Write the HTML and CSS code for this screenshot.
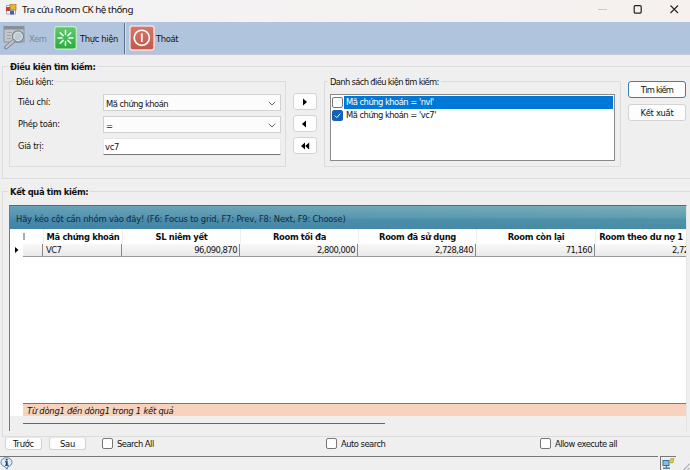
FILE: index.html
```html
<!DOCTYPE html>
<html lang="vi">
<head>
  <meta charset="UTF-8" />
  <meta name="viewport" content="width=device-width, initial-scale=1.0" />
  <title>Tra cứu Room CK hệ thống</title>
  <link rel="stylesheet" href="styles.css">
</head>
<body>
  <div class="titlebar">
    <svg class="app-icon" width="11" height="11" viewBox="0 0 11 11">
      <rect x="0.5" y="1.5" width="9" height="8.5" fill="#fff" stroke="#a9a9b4"/>
      <rect x="4" y="0" width="6" height="6" fill="#e8b43c" stroke="#9a7418" stroke-width=".7"/>
      <rect x="0" y="3" width="4" height="4" fill="#c9422f"/>
      <rect x="4" y="6.5" width="4" height="4" fill="#3e62b8"/>
    </svg>
    <span class="caption">Tra cứu Room CK hệ thống</span>
    <svg class="window-buttons" width="84" height="12" viewBox="0 0 84 12" fill="none">
      <path d="M0 5.5h9" stroke="#c9c6c4"/>
      <rect x="36.2" y="1.7" width="7" height="7.4" rx="1" stroke="#222" stroke-width="1.2"/>
      <path d="M72.5 1.5l7.5 7.5M80 1.5l-7.5 7.5" stroke="#222" stroke-width="1.1"/>
    </svg>
  </div>

  <div class="toolbar">
    <div class="tool tool-view">
      <svg width="24" height="26" viewBox="0 0 24 26">
        <rect x="1" y="1.5" width="20" height="15.5" fill="#c2c6ca" stroke="#8b9198"/>
        <path d="M1 3h20" stroke="#888e95" stroke-width="3"/>
        <path d="M4 7.5h5M4 10.5h4M4 13.5h4" stroke="#a0a6ac"/>
        <circle cx="15" cy="11.5" r="5.6" fill="#bfcad6" stroke="#80878f" stroke-width="1.2"/>
        <circle cx="15" cy="11.5" r="4.2" fill="none" stroke="#dde3ea"/>
        <path d="M10.7 16L3 22.5" stroke="#858c94" stroke-width="4" stroke-linecap="round"/>
        <path d="M10.2 16.3L3.3 22.2" stroke="#c3c9cf" stroke-width="2" stroke-linecap="round"/>
      </svg>
      <span>Xem</span>
    </div>
    <div class="tool tool-run">
      <svg width="23" height="24" viewBox="0 0 23 24">
        <defs>
          <linearGradient id="green" x1="0" y1="0" x2="0" y2="1">
            <stop offset="0" stop-color="#62c971"/><stop offset="1" stop-color="#27ad3d"/>
          </linearGradient>
        </defs>
        <rect x=".7" y=".7" width="21.6" height="22.4" rx="2.5" fill="url(#green)" stroke="#c8efcd" stroke-width="1.2"/>
        <g stroke="#f0fff0" stroke-width="1.5" stroke-linecap="round">
          <path d="M11.5 4.5v4M11.5 15.5v4M4 12h4M15 12h4M6.2 6.7l2.9 2.9M13.9 14.4l2.9 2.9M16.8 6.7l-2.9 2.9M9.1 14.4l-2.9 2.9"/>
        </g>
      </svg>
      <span>Thực hiện</span>
    </div>
    <div class="tool-separator"></div>
    <div class="tool tool-exit">
      <svg width="26" height="26" viewBox="0 0 26 26">
        <defs>
          <linearGradient id="red" x1="0" y1="0" x2="0" y2="1">
            <stop offset="0" stop-color="#d7786c"/><stop offset="1" stop-color="#c4564a"/>
          </linearGradient>
        </defs>
        <rect x=".9" y=".9" width="24.2" height="24.2" rx="2.5" fill="url(#red)" stroke="#f3d8d6" stroke-width="1.6"/>
        <circle cx="12.8" cy="12.8" r="7.6" fill="none" stroke="#fff" stroke-width="1.6"/>
        <path d="M12.8 8.5v8.5" stroke="#fff" stroke-width="1.8"/>
      </svg>
      <span>Thoát</span>
    </div>
  </div>

  <fieldset class="search">
    <legend>Điều kiện tìm kiếm:</legend>
    <div class="search-row">
      <fieldset class="conditions">
        <legend>Điều kiện:</legend>
        <div class="field">
          <label>Tiêu chí:</label>
          <div class="combo"><span>Mã chứng khoán</span>
            <svg width="8" height="5" viewBox="0 0 8 5"><path d="M.8.8L4 4 7.2.8" fill="none" stroke="#666"/></svg></div>
        </div>
        <div class="field">
          <label>Phép toán:</label>
          <div class="combo"><span>=</span>
            <svg width="8" height="5" viewBox="0 0 8 5"><path d="M.8.8L4 4 7.2.8" fill="none" stroke="#666"/></svg></div>
        </div>
        <div class="field">
          <label>Giá trị:</label>
          <div class="textbox">vc7</div>
        </div>
      </fieldset>

      <div class="arrows">
        <button type="button"><svg width="10" height="8" viewBox="0 0 10 8"><path d="M3 0.5L7 4 3 7.5z"/></svg></button>
        <button type="button"><svg width="10" height="8" viewBox="0 0 10 8"><path d="M6 0.5L2 4 6 7.5z"/></svg></button>
        <button type="button"><svg width="10" height="8" viewBox="0 0 10 8"><path d="M5 0.5L1 4 5 7.5zM9.2 0.5L5.2 4 9.2 7.5z"/></svg></button>
      </div>

      <fieldset class="condition-list">
        <legend>Danh sách điều kiện tìm kiếm:</legend>
        <div class="listbox">
          <div class="item selected"><i class="check"></i><span>Mã chứng khoán = 'nvl'</span></div>
          <div class="item"><i class="check checked"><svg width="9" height="9" viewBox="0 0 9 9"><path d="M1.8 4.6l2 2 3.5-4" fill="none" stroke="#fff"/></svg></i><span>Mã chứng khoán = 'vc7'</span></div>
        </div>
      </fieldset>

      <div class="actions">
        <button type="button" class="default">Tìm kiếm</button>
        <button type="button">Kết xuất</button>
      </div>
    </div>
  </fieldset>

  <fieldset class="results">
    <legend>Kết quả tìm kiếm:</legend>
    <div class="grid">
      <div class="group-panel">Hãy kéo cột cần nhóm vào đây! (F6: Focus to grid, F7: Prev, F8: Next, F9: Choose)</div>
      <div class="columns header">
        <div></div>
        <div class="marker"></div>
        <div>Mã chứng khoán</div>
        <div>SL niêm yết</div>
        <div>Room tối đa</div>
        <div>Room đã sử dụng</div>
        <div>Room còn lại</div>
        <div class="last">Room theo dư nợ 1</div>
      </div>
      <div class="columns record">
        <div class="pointer"><svg width="4" height="6" viewBox="0 0 4 6"><path d="M0 0L3.5 3 0 6z"/></svg></div>
        <div></div>
        <div class="code">VC7</div>
        <div>96,090,870</div>
        <div>2,800,000</div>
        <div>2,728,840</div>
        <div>71,160</div>
        <div class="last">2,728,840</div>
      </div>
      <div class="empty"></div>
      <div class="summary">Từ dòng1 đến dòng1 trong 1 kết quả</div>
      <div class="scrollbar"><div class="thumb"></div></div>
    </div>
  </fieldset>

  <div class="footer">
    <button type="button">Trước</button>
    <button type="button">Sau</button>
    <label class="option option-all"><i class="check"></i>Search All</label>
    <label class="option option-auto"><i class="check"></i>Auto search</label>
    <label class="option option-execute"><i class="check"></i>Allow execute all</label>
  </div>

  <div class="statusbar">
    <div class="status-main">
      <svg width="13" height="13" viewBox="0 0 13 13">
        <path d="M6.5.7C3.2.7 1 2.7 1 5.3c0 2.5 1.9 4 4.2 4.5L7 12.3l.6-2.5C10.2 9.3 12 7.7 12 5.3 12 2.700 9.8.7 6.5.7z" fill="#dceefb" stroke="#5c8aa8"/>
        <path d="M5.8 1.9h1.8v1.5H5.8zM5 4.3h2.6v3.5h1v1H5v-1h.9V5.2H5z" fill="#12306e"/>
      </svg>
    </div>
    <div class="status-net">
      <svg width="14" height="13" viewBox="0 0 14 13">
        <rect x="2" y="3.5" width="6" height="5" fill="#7fc0e8" stroke="#3f6f9f"/>
        <path d="M2 11.3h7M5.5 9v2" stroke="#5d7f9c" stroke-width="1.5"/>
        <path d="M8 4.5l2-3h3l-1 4-2 .5z" fill="#e9c63a" stroke="#a88a22" stroke-width=".6"/>
      </svg>
    </div>
    <svg class="grip" width="8" height="9" viewBox="0 0 8 9"><path d="M1 8.5L8 1.5M5 8.5L8 5.5" stroke="#888"/></svg>
  </div>
</body>
</html>
```
FILE: styles.css
```css
* {
  box-sizing: border-box;
}

body {
  margin: 0;
  width: 690px;
  height: 470px;
  overflow: hidden;
  display: flex;
  flex-direction: column;
  background: #efefef;
  color: #111;
  font-family: "DejaVu Sans Condensed", "DejaVu Sans", sans-serif;
  font-stretch: condensed;
  font-size: 9.3px;
  letter-spacing: -0.5px;
  white-space: nowrap;
}

fieldset {
  margin: 0;
  padding: 0;
  min-width: 0;
  border: 1px solid #dcdcdc;
  flex: none;
}

legend {
  height: 13px;
  line-height: 13px;
  padding: 0 2px;
}

button {
  font: inherit;
  letter-spacing: inherit;
  color: inherit;
  padding: 0;
  background: #fdfdfd;
  border: 1px solid #d3d3d3;
  border-radius: 3px;
  display: flex;
  align-items: center;
  justify-content: center;
}

/* title bar */
.titlebar {
  height: 22px;
  flex: none;
  display: flex;
  align-items: center;
  padding: 0 22px 3px 6px;
  background: linear-gradient(90deg, #f3f3f4, #f6f1ef);
}

.caption {
  font-family: "Noto Sans", sans-serif;
  font-stretch: normal;
  font-size: 9.8px;
  letter-spacing: -0.5px;
  margin-left: 5px;
}

.window-buttons {
  margin-left: auto;
  margin-right: -14px;
}

/* toolbar */
.toolbar {
  height: 33px;
  flex: none;
  display: flex;
  align-items: center;
  background: #b0c4de;
  border-bottom: 1px solid #c6c8d8;
  letter-spacing: -0.35px;
}

.tool {
  display: flex;
  align-items: center;
}

.tool-view {
  margin-left: 3px;
  width: 51px;
  gap: 2px;
  color: #7d8797;
}

.tool-run {
  width: 70px;
  gap: 3px;
}

.tool-exit {
  margin-left: 3px;
  gap: 1px;
}

.tool-separator {
  width: 2px;
  height: 31px;
  background: #5b7191;
  border-right: 1px solid #d3dfee;
}

/* search conditions */
.search {
  width: 700px;
  height: 119px;
  margin: 5px 0 0 2px;
}

.search > legend,
.results > legend {
  margin-left: 5px;
  font-weight: bold;
  letter-spacing: -0.35px;
}

.search-row {
  display: flex;
  padding: 2px 0 0 6px;
}

.conditions {
  width: 277px;
  height: 92px;
}

.conditions > legend,
.condition-list > legend {
  margin-left: 4px;
}

.condition-list > legend {
  margin-left: 3px;
  letter-spacing: -0.65px;
}

.field {
  display: flex;
  align-items: center;
  height: 17px;
  margin-bottom: 5px;
}

.conditions > legend + .field {
  margin-top: 6px;
}

.field label {
  width: 93px;
  padding-left: 8px;
  padding-bottom: 2px;
  letter-spacing: -0.35px;
}

.combo,
.textbox {
  width: 178px;
  height: 17px;
  display: flex;
  align-items: center;
  justify-content: space-between;
  padding: 1px 4px 0 2px;
  background: #fcfcfc;
  border: 1px solid #d0d0d0;
}

.textbox {
  background: #fff;
  border-color: #e8e8e8;
  border-bottom-color: #777;
  padding: 0 0 0 1px;
  letter-spacing: -0.25px;
}

.arrows {
  margin: 18px 7px 0;
  display: flex;
  flex-direction: column;
  gap: 5px;
}

.arrows button {
  width: 24px;
  height: 17px;
}

.condition-list {
  width: 297px;
  height: 92px;
}

.listbox {
  margin: 6px 0 0 5px;
  width: 285px;
  height: 67px;
  padding: 1px;
  background: #fff;
  border: 1px solid #8a8a8a;
}

.item {
  display: flex;
  align-items: center;
  height: 13px;
}

.item span {
  flex: 1;
  height: 13px;
  line-height: 12px;
  margin-left: 1px;
  padding-left: 2px;
}

.item.selected span {
  background: #0078d7;
  color: #fff;
}

.check {
  flex: none;
  width: 11px;
  height: 11px;
  background: #fff;
  border: 1px solid #777;
  border-radius: 2px;
}

.check.checked {
  background: #1562b4;
  border-color: #1562b4;
}

.check svg {
  display: block;
}

.actions {
  margin: 6px 0 0 7px;
  display: flex;
  flex-direction: column;
  gap: 6px;
  letter-spacing: -0.8px;
}

.actions button {
  width: 58px;
  height: 17px;
}

.actions button + button {
  letter-spacing: -0.3px;
}

.actions .default {
  border-color: #3c7fae;
}

/* results */
.results {
  width: 700px;
  height: 252px;
  margin: 6px 0 0 2px;
}

.grid {
  margin: 7px 0 0 6px;
  width: 678px;
  height: 226px;
  display: flex;
  flex-direction: column;
  background: #fff;
  border-left: 1px solid #777;
  border-top: 1px solid #666;
  border-right: 1px solid #e4e4e4;
  overflow: hidden;
}

.group-panel {
  height: 23px;
  flex: none;
  line-height: 25px;
  padding-left: 6px;
  color: #152a3c;
  font-size: 9.4px;
  letter-spacing: -0.2px;
  background:
    linear-gradient(90deg, rgba(58, 124, 178, 0.35), rgba(90, 160, 170, 0.15)),
    linear-gradient(180deg, #7fb3bd, #609daf 50%, #4e90a8 58%, #4688a3);
}

.columns {
  display: grid;
  grid-template-columns: 13px 20px 79px 118px 118px 118px 119px 1fr;
  flex: none;
}

.header {
  height: 15px;
  line-height: 15px;
  text-align: center;
  font-weight: bold;
  letter-spacing: -0.33px;
}

.header div + div {
  border-left: 1px solid #eee;
}

.header .marker {
  border-left: 2px solid #aaa;
  height: 7px;
  margin-top: 4px;
  width: 2px;
}

.record {
  height: 13px;
  line-height: 12px;
}

.record div {
  text-align: right;
  padding-right: 2px;
  border-right: 1px solid #888;
  border-bottom: 1px solid #999;
  background: linear-gradient(180deg, #f8f8f8, #e9e9e9);
  overflow: hidden;
}

.record .pointer {
  display: flex;
  align-items: center;
  padding-left: 5px;
  background: #fff;
  border-color: #fff;
}

.record .code {
  text-align: left;
  padding-left: 3px;
}

.columns .last {
  overflow: hidden;
}

.record .last {
  width: 118px;
}

.empty {
  flex: 1;
}

.summary {
  height: 13px;
  flex: none;
  margin-left: 13px;
  padding-left: 4px;
  line-height: 13px;
  font-style: italic;
  letter-spacing: -0.23px;
  background: #f7d3bd;
  border-top: 1px solid #777;
}

.scrollbar {
  height: 15px;
  flex: none;
  display: flex;
  align-items: center;
  padding-left: 13px;
  background: #efefef;
}

.thumb {
  width: 362px;
  height: 1px;
  background: #666;
}

/* footer */
.footer {
  height: 19px;
  flex: none;
  display: flex;
  align-items: flex-start;
  padding-left: 5px;
}

.footer button {
  width: 37px;
  height: 13px;
  margin-right: 7px;
  border-top-color: #e8e8e8;
  letter-spacing: -0.25px;
}

.option {
  display: flex;
  align-items: center;
  height: 13px;
  gap: 4px;
}

.option-all {
  width: 224px;
  margin-left: 9px;
}

.option-auto {
  width: 214px;
}

/* status bar */
.statusbar {
  flex: 1;
  display: flex;
}

.status-main {
  width: 658px;
  margin-right: 2px;
  border-top: 1px solid #777;
}

.status-net {
  width: 16px;
  border-top: 1px solid #777;
  border-left: 1px solid #777;
}

.grip {
  margin: 6px 0 0 auto;
}
```
